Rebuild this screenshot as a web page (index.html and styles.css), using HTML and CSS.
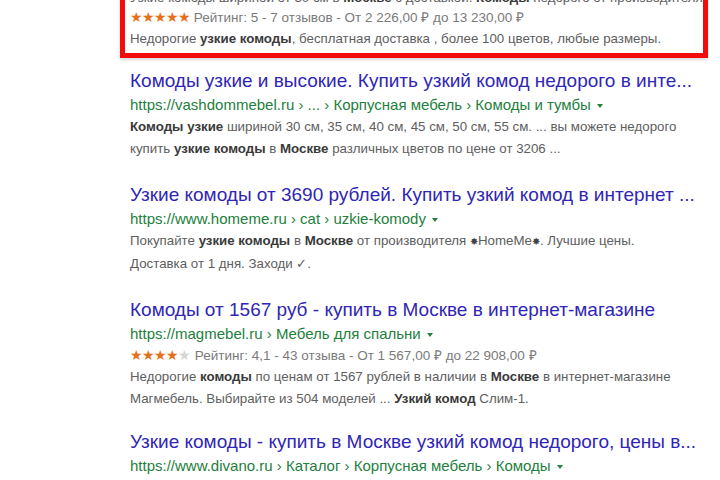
FILE: index.html
```html
<!DOCTYPE html>
<html lang="ru">
<head>
<meta charset="utf-8">
<title>Узкие комоды</title>
<link rel="stylesheet" href="styles.css">
</head>
<body>
<div class="page">
  <div class="highlight">
    <div class="snippet cut">Узкие комоды шириной от 30 см в <b>Москве</b> с доставкой. <b>Комоды</b> недорого от производителя</div>
    <div class="rating"><span class="stars">★★★★★</span> Рейтинг: 5 - 7 отзывов - От 2 226,00 ₽ до 13 230,00 ₽</div>
    <div class="snippet desc">Недорогие <b>узкие комоды</b>, бесплатная доставка , более 100 цветов, любые размеры.</div>
  </div>

  <div class="result">
    <div class="title">Комоды узкие и высокие. Купить узкий комод недорого в инте...</div>
    <div class="url">https://vashdommebel.ru › ... › Корпусная мебель › Комоды и тумбы <span class="caret"></span></div>
    <div class="snippet"><b>Комоды узкие</b> шириной 30 см, 35 см, 40 см, 45 см, 50 см, 55 см. ... вы можете недорого</div>
    <div class="snippet">купить <b>узкие комоды</b> в <b>Москве</b> различных цветов по цене от 3206 ...</div>
  </div>

  <div class="result">
    <div class="title">Узкие комоды от 3690 рублей. Купить узкий комод в интернет ...</div>
    <div class="url">https://www.homeme.ru › cat › uzkie-komody <span class="caret"></span></div>
    <div class="snippet">Покупайте <b>узкие комоды</b> в <b>Москве</b> от производителя <span class="mark">✸</span>HomeMe<span class="mark">✸</span>. Лучшие цены.</div>
    <div class="snippet">Доставка от 1 дня. Заходи ✓.</div>
  </div>

  <div class="result">
    <div class="title">Комоды от 1567 руб - купить в Москве в интернет-магазине</div>
    <div class="url">https://magmebel.ru › Мебель для спальни <span class="caret"></span></div>
    <div class="rating"><span class="stars">★★★★</span><span class="star-off">★</span> Рейтинг: 4,1 - 43 отзыва - От 1 567,00 ₽ до 22 908,00 ₽</div>
    <div class="snippet">Недорогие <b>комоды</b> по ценам от 1567 рублей в наличии в <b>Москве</b> в интернет-магазине</div>
    <div class="snippet">Магмебель. Выбирайте из 504 моделей ... <b>Узкий комод</b> Слим-1.</div>
  </div>

  <div class="result last">
    <div class="title">Узкие комоды - купить в Москве узкий комод недорого, цены в...</div>
    <div class="url">https://www.divano.ru › Каталог › Корпусная мебель › Комоды <span class="caret"></span></div>
  </div>
</div>
</body>
</html>
```

FILE: styles.css
```css
html, body {
  margin: 0;
  padding: 0;
  background: #ffffff;
}

body {
  width: 720px;
  height: 480px;
  overflow: hidden;
  font-family: "Liberation Sans", Arial, sans-serif;
}

.page {
  padding-left: 120px;
}

.highlight {
  width: 568px;
  margin-top: -12px;
  border: 5px solid #f20d0d;
  border-top-width: 0;
  padding: 0 5px 4px 5px;
  box-shadow: 0 2px 3px rgba(0, 0, 0, 0.15);
}

.highlight .rating {
  line-height: 20px;
}

.highlight .desc {
  line-height: 21px;
}

.snippet.cut {
  line-height: 19px;
}

.result {
  padding-left: 10px;
  margin-top: 11px;
  margin-bottom: 12px;
}

.result + .result {
  margin-top: 23px;
}

.result.last {
  margin-top: 20px;
}

.result .rating {
  line-height: 21px;
}

.title {
  font-size: 19px;
  line-height: 24px;
  color: #3026b5;
  white-space: nowrap;
}

.url {
  font-size: 15px;
  line-height: 23px;
  color: #23803d;
  white-space: nowrap;
}

.caret {
  display: inline-block;
  width: 0;
  height: 0;
  border-left: 3px solid transparent;
  border-right: 3px solid transparent;
  border-top: 4px solid #23803d;
  vertical-align: middle;
  margin-left: 2px;
}

.snippet {
  font-size: 13.3px;
  line-height: 22px;
  color: #5e5e5e;
  white-space: nowrap;
}

.snippet b {
  color: #3a3a3a;
}

.rating {
  font-size: 13.5px;
  line-height: 22px;
  color: #7a7a7a;
  white-space: nowrap;
}

.stars {
  color: #e7711b;
  font-size: 14px;
  letter-spacing: -1px;
}

.star-off {
  color: #d6d6d6;
  font-size: 14px;
}

.mark {
  color: #444;
  font-size: 10px;
}
```
